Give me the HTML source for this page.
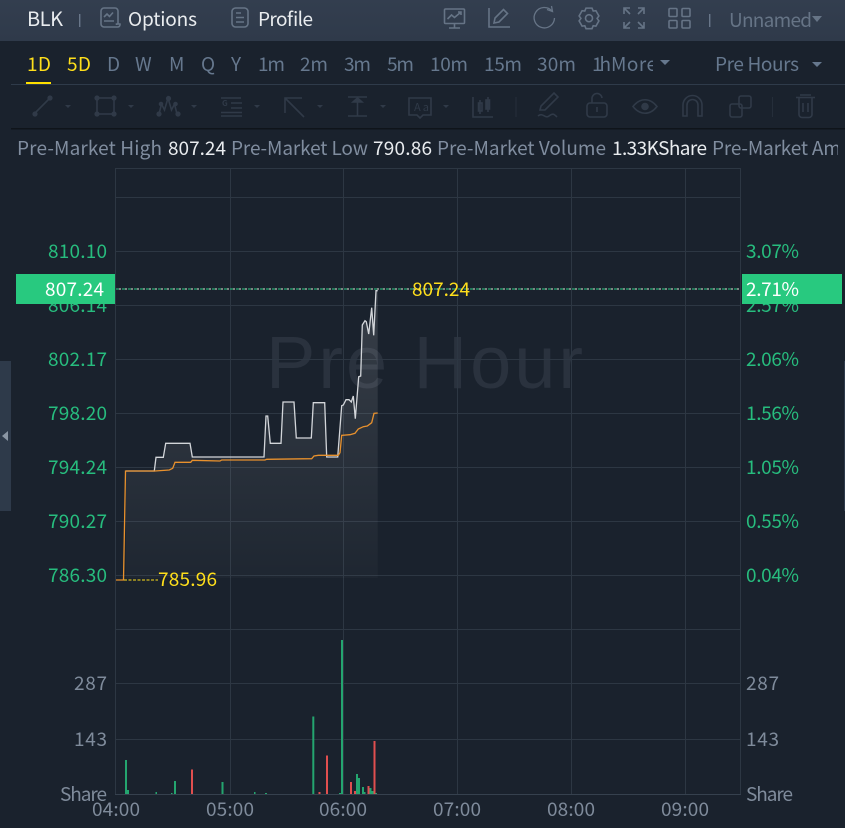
<!DOCTYPE html>
<html><head><meta charset="utf-8">
<style>
html,body{margin:0;padding:0;background:#1a222d;width:845px;height:828px;overflow:hidden}
svg{display:block;position:absolute;left:0;top:0}
text{font-family:"Noto Sans CJK SC","Liberation Sans",sans-serif;font-size:19px}
.g{fill:#27bd7e}.a{fill:#7f8b9b}.w{fill:#e9ecef}.m{fill:#808d9f}.y{fill:#ffdf1b}
.ic{fill:none;stroke:#667486;stroke-width:1.6}
.tb{fill:none;stroke:#303a48;stroke-width:1.6}
.tf{fill:#303a48}
</style></head><body>
<svg width="845" height="828" viewBox="0 0 845 828" xmlns="http://www.w3.org/2000/svg">
<defs>
<linearGradient id="h" x1="0" y1="0" x2="0" y2="1"><stop offset="0" stop-color="#333e4f"/><stop offset="1" stop-color="#2f3a4a"/></linearGradient>
<linearGradient id="f" gradientUnits="userSpaceOnUse" x1="0" y1="290" x2="0" y2="578"><stop offset="0" stop-color="#fff" stop-opacity=".13"/><stop offset="1" stop-color="#fff" stop-opacity=".02"/></linearGradient>
<clipPath id="c1"><rect x="0" y="130" width="838" height="36"/></clipPath>
<clipPath id="c2"><rect x="611" y="45" width="42" height="36"/></clipPath>
</defs>
<rect width="845" height="828" fill="#1a222d"/>
<rect width="845" height="41" fill="url(#h)"/>
<rect x="11" y="84" width="834" height="1" fill="#2f3b4a"/>
<rect x="11" y="128" width="834" height="1.5" fill="#0f141a"/>

<!-- header -->
<text x="27" y="26" class="w" style="font-size:20px" textLength="36">BLK</text>
<rect x="79" y="14" width="1.4" height="13" fill="#69778a"/>
<g class="ic"><path d="M101 24V11a3 3 0 0 1 3-3h11a3 3 0 0 1 3 3v13"/><path d="M101 24a3 3 0 0 0 3 3h14a2.500 2.500 0 0 0 2-3h-3.500v1M104 27"/><path d="M104 17l3-3 2.500 2.500 3.500-4M104 21h10"/></g>
<text x="128" y="26" class="w" textLength="69">Options</text>
<g class="ic"><rect x="232" y="8" width="16" height="19" rx="3.500"/><path d="M236 13h5M236 17.500h8M236 22h8"/></g>
<text x="258" y="26" class="w" textLength="55">Profile</text>

<g class="ic">
<rect x="444.500" y="9" width="20" height="14.500" rx="1"/><path d="M447.500 19l4-4 3 2.500 6-5M458 12h3v3M454.500 23.500v4M449 28h11"/>
<path d="M489 8v19h21"/><path d="M494 23l1-5 8.500-8.500 4 4-8.500 8.500z"/>
<path d="M552 11a10.200 10.200 0 1 0 2.500 7" stroke-width="1.300"/><path d="M547 9.500l5.500 2-1 -5.500" stroke-width="1.300"/>
<path d="M586 8.500h6l1.200 3 2.700-.4 3 5.400-1.800 2.500 1.800 2.500-3 5.400-2.700-.4-1.200 3h-6l-1.200-3-2.700.4-3-5.400 1.800-2.500-1.800-2.500 3-5.400 2.700.4z" transform="translate(0 -.2) scale(1 .98)"/>
<circle cx="589" cy="18.200" r="3.500"/>
<path d="M624 14V8h6M624 8l6 6M644 14V8h-6M644 8l-6 6M624 22v6h6M624 28l6-6M644 22v6h-6M644 28l-6-6"/>
<rect x="669" y="8.500" width="8" height="8" rx="1"/><rect x="682" y="8.500" width="8" height="8" rx="1"/><rect x="669" y="20.500" width="8" height="7.500" rx="1"/><rect x="682" y="20.500" width="8" height="7.500" rx="1"/>
</g>
<rect x="709" y="14" width="1.400" height="13" fill="#69778a"/>
<text x="729" y="27" fill="#667486" textLength="83">Unnamed</text>
<path d="M812 16h10l-5 6z" fill="#667486"/>

<!-- period row -->
<text x="27" y="71" class="y" textLength="24">1D</text>
<text x="67" y="71" class="y" textLength="24">5D</text>
<g fill="#66788e">
<text x="107" y="71" textLength="13">D</text>
<text x="135" y="71" textLength="18">W</text>
<text x="169" y="71" textLength="16">M</text>
<text x="201" y="71" textLength="15">Q</text>
<text x="231" y="71" textLength="12">Y</text>
<text x="258" y="71" textLength="27">1m</text>
<text x="300" y="71" textLength="28">2m</text>
<text x="344" y="71" textLength="27">3m</text>
<text x="387" y="71" textLength="27">5m</text>
<text x="430" y="71" textLength="38">10m</text>
<text x="484" y="71" textLength="38">15m</text>
<text x="537" y="71" textLength="39">30m</text>
<text x="592" y="71" textLength="19">1h</text>
<text x="611" y="71" textLength="46" clip-path="url(#c2)">More</text>
<text x="715" y="71" textLength="84">Pre Hours</text>
<path d="M660 60h10l-5 5zM812 62h10l-5 5z"/>
</g>
<rect x="26" y="82" width="25" height="2" fill="#ffe000"/>

<!-- toolbar -->
<g class="tb">
<path d="M35 113l15-15"/><circle cx="35" cy="114" r="1.800" class="tf"/><circle cx="50" cy="98" r="1.800" class="tf"/>
<rect x="97" y="98" width="17" height="16"/><circle cx="97" cy="98" r="1.800" class="tf"/><circle cx="114" cy="98" r="1.800" class="tf"/><circle cx="97" cy="114" r="1.800" class="tf"/><circle cx="114" cy="114" r="1.800" class="tf"/>
<path d="M159 114l2.500-10 3 6 3.500-12 3.500 12 3-6 2.500 10"/><circle cx="159" cy="114" r="1.800" class="tf"/><circle cx="168.500" cy="98.500" r="1.800" class="tf"/><circle cx="178" cy="114" r="1.800" class="tf"/><circle cx="161" cy="104" r="1.500" class="tf"/><circle cx="175.500" cy="104" r="1.500" class="tf"/>
<path d="M221 98h20M231 103h11M231 108h11M221 112.500h21M221 116h21"/>
<path d="M285 113V98h17M285 98l19 19"/>
<path d="M348 97h19M348 116h19M357.500 101v15"/><path d="M353 102l4.500-4 4.500 4z" class="tf"/>
<path d="M409 98h22v17h-8l-3 3-3-3h-8z"/>
<path d="M473 97v20h20"/><rect x="478.500" y="103" width="3.500" height="8"/><rect x="486" y="100" width="3.500" height="9" class="tf"/><path d="M480 100v14M488 97v15"/>
<path d="M540 110l1-4 13-13 4 4-13 13zM538 116c5-4 7 3 11 0s5-2 8 1"/>
<rect x="587" y="103" width="20" height="14" rx="3"/><path d="M592 103v-4a5 5 0 0 1 10-1M597 107v5"/>
<path d="M633 106.500c7-9 17-9 24 0-7 9-17 9-24 0z"/><circle cx="645" cy="106.500" r="3" class="tf"/>
<path d="M683 116v-11a9.500 9.500 0 0 1 19 0v11h-4v-11a5.500 5.500 0 0 0-11 0v11z"/>
<rect x="730" y="104" width="12" height="13" rx="2"/><rect x="739" y="96" width="12" height="12" rx="2"/>
<path d="M796 97.500h19M799 97.500v17a3 3 0 0 0 3 3h7a3 3 0 0 0 3-3v-17M803 103v9M808 103v9M800 95h11"/>
</g>
<path d="M63 105h6l-3 3zM126 105h6l-3 3zM189 105h6l-3 3zM252 105h6l-3 3zM315 105h6l-3 3zM378 105h6l-3 3zM441 105h6l-3 3z" class="tf" style="stroke:none" transform="translate(2,0)"/>
<rect x="515.500" y="97" width="1" height="20" fill="#252e3a"/><rect x="772" y="97" width="1" height="20" fill="#252e3a"/>
<text x="414" y="111" fill="#303a48" style="font-size:11px" textLength="15">Aa</text>
<text x="222" y="106" fill="#303a48" style="font-size:8px;font-weight:bold">G</text>

<!-- info row -->
<g clip-path="url(#c1)">
<text x="17" y="155" class="m" textLength="145">Pre-Market High</text>
<text x="168" y="155" class="w" textLength="58">807.24</text>
<text x="231" y="155" class="m" textLength="137">Pre-Market Low</text>
<text x="373" y="155" class="w" textLength="59">790.86</text>
<text x="437" y="155" class="m" textLength="169">Pre-Market Volume</text>
<text x="612" y="155" class="w" textLength="95">1.33KShare</text>
<text x="712" y="155" class="m" textLength="170">Pre-Market Amount</text>
</g>

<!-- watermark -->
<text x="266" y="388" fill="#2a323e" style="font-family:'Liberation Sans',sans-serif;font-size:74px" textLength="317">Pre Hour</text>

<!-- grid -->
<g fill="#2d3743">
<rect x="115" y="168" width="625" height="1"/>
<rect x="115" y="197" width="625" height="1"/>
<rect x="115" y="251" width="625" height="1"/>
<rect x="115" y="305" width="625" height="1"/>
<rect x="115" y="359" width="625" height="1"/>
<rect x="115" y="413" width="625" height="1"/>
<rect x="115" y="467" width="625" height="1"/>
<rect x="115" y="521" width="625" height="1"/>
<rect x="115" y="575" width="625" height="1"/>
<rect x="115" y="629" width="625" height="1"/>
<rect x="115" y="683" width="625" height="1"/>
<rect x="115" y="739" width="625" height="1"/>
<rect x="230" y="168" width="1" height="626"/>
<rect x="343" y="168" width="1" height="626"/>
<rect x="457" y="168" width="1" height="626"/>
<rect x="571" y="168" width="1" height="626"/>
<rect x="685" y="168" width="1" height="626"/>
<rect x="115" y="168" width="1" height="627"/>
<rect x="740" y="168" width="1" height="627"/>
</g>
<rect x="115" y="794" width="626" height="1" fill="#36414e"/>

<!-- area -->
<path fill="url(#f)" d="M126 471H154.300L156 457.300H163.300L165.700 443.300H190L192.300 457H264L266 416H267.700L270.300 443.300H281L283 402H294L296.300 438H311.300L313.300 402.700H324.700L326.700 457H337.700L341.700 405.700L343.300 405L346 399.700H349L351.300 402L353.300 396L355.300 418.700L358.700 376.700L360.700 376L362.300 325L365 320.700L366.300 321.700L368.700 334L371.700 307.700L373.700 335.300L376 290.700H377.700V578H126Z"/>
<path fill="none" stroke="#d3d6da" stroke-width="1.300" d="M126 471H154.300L156 457.300H163.300L165.700 443.300H190L192.300 457H264L266 416H267.700L270.300 443.300H281L283 402H294L296.300 438H311.300L313.300 402.700H324.700L326.700 457H337.700L341.700 405.700L343.300 405L346 399.700H349L351.300 402L353.300 396L355.300 418.700L358.700 376.700L360.700 376L362.300 325L365 320.700L366.300 321.700L368.700 334L371.700 307.700L373.700 335.300L376 290.700H377.700"/>
<path fill="none" stroke="#e8912d" stroke-width="1.300" d="M116 580H123.500L125.500 471H155L169.300 470L172.700 468.300L175 462.300H190.700L192.300 460.300L220 461L221.700 460H265L266.700 459.300L311.700 458.700L314 456L318.300 455.300H338.300L340 452.700L341.700 435.300L350 434.700L355 433.300L358.300 429L363.300 426.700L367.300 426L371.700 422.700L374 413.300L377.700 413"/>

<!-- dashed -->
<path d="M116 289H740" stroke="#e4e8dc" stroke-width="1" stroke-dasharray="2 4" stroke-dashoffset="3" fill="none"/>
<path d="M116 289H740" stroke="#2bcb84" stroke-width="1" stroke-dasharray="3 3" fill="none"/>
<path d="M124 580H158" stroke="#ffdf1b" stroke-width="1" stroke-dasharray="3 1.500" fill="none"/>
<text x="412" y="296" class="y" textLength="58">807.24</text>
<text x="158" y="586" class="y" textLength="59">785.96</text>

<!-- volume -->
<g fill="#24a56f">
<rect x="125" y="760" width="2" height="34"/><rect x="127" y="790" width="2" height="4"/><rect x="155.500" y="792" width="1.500" height="2"/><rect x="171" y="793" width="1.500" height="1"/><rect x="174" y="781" width="2" height="13"/><rect x="221.500" y="782" width="2" height="12"/><rect x="254" y="792" width="1.500" height="2"/><rect x="265" y="793" width="2" height="1"/><rect x="312.300" y="716.500" width="2" height="77.500"/><rect x="339" y="793" width="2" height="1"/><rect x="341" y="640" width="2" height="154"/><rect x="356" y="774" width="2" height="20"/><rect x="358" y="778" width="2" height="16"/><rect x="362" y="787" width="2" height="7"/><rect x="364" y="792" width="1.500" height="2"/><rect x="369.500" y="788" width="2" height="6"/><rect x="371.500" y="791" width="2" height="3"/><rect x="375" y="793" width="2" height="1"/>
</g>
<g fill="#e04f4f">
<rect x="191" y="769.500" width="2" height="24.500"/><rect x="318.500" y="792" width="2" height="2"/><rect x="326" y="755.500" width="2" height="38.500"/><rect x="350" y="782" width="2" height="12"/><rect x="354" y="791" width="2" height="3"/><rect x="367.500" y="786" width="2" height="8"/><rect x="373.500" y="741" width="2" height="53"/>
</g>

<!-- y labels left -->
<g class="g">
<text x="48" y="258" textLength="59">810.10</text>
<text x="48" y="312" textLength="59">806.14</text>
<text x="48" y="366" textLength="59">802.17</text>
<text x="48" y="420" textLength="59">798.20</text>
<text x="48" y="474" textLength="59">794.24</text>
<text x="48" y="528" textLength="59">790.27</text>
<text x="48" y="582" textLength="59">786.30</text>
</g>
<g class="g">
<text x="746" y="258" textLength="53">3.07%</text>
<text x="746" y="312" textLength="53">2.57%</text>
<text x="746" y="366" textLength="53">2.06%</text>
<text x="746" y="420" textLength="53">1.56%</text>
<text x="746" y="474" textLength="53">1.05%</text>
<text x="746" y="528" textLength="53">0.55%</text>
<text x="746" y="582" textLength="53">0.04%</text>
</g>
<rect x="16" y="274" width="99" height="30" fill="#28c97f"/>
<rect x="742" y="274" width="100" height="30" fill="#28c97f"/>
<text x="45" y="296" fill="#fff" textLength="59">807.24</text>
<text x="746" y="296" fill="#fff" textLength="53">2.71%</text>

<!-- volume labels -->
<g class="a">
<text x="74" y="690" textLength="33">287</text>
<text x="74" y="746" textLength="33">143</text>
<text x="60" y="801" textLength="47">Share</text>
<text x="746" y="690" textLength="33">287</text>
<text x="746" y="746" textLength="33">143</text>
<text x="746" y="801" textLength="47">Share</text>
<text x="92" y="816" textLength="48">04:00</text>
<text x="206" y="816" textLength="48">05:00</text>
<text x="319" y="816" textLength="48">06:00</text>
<text x="433" y="816" textLength="48">07:00</text>
<text x="547" y="816" textLength="48">08:00</text>
<text x="661" y="816" textLength="48">09:00</text>
</g>

<!-- side handles -->
<rect x="0" y="361" width="11" height="150" fill="#2e3a4a"/>
<path d="M8 431v10l-6-5z" fill="#8a95a3"/>
<rect x="844" y="361" width="1" height="150" fill="#2e3a4a"/>
</svg>
</body></html>
